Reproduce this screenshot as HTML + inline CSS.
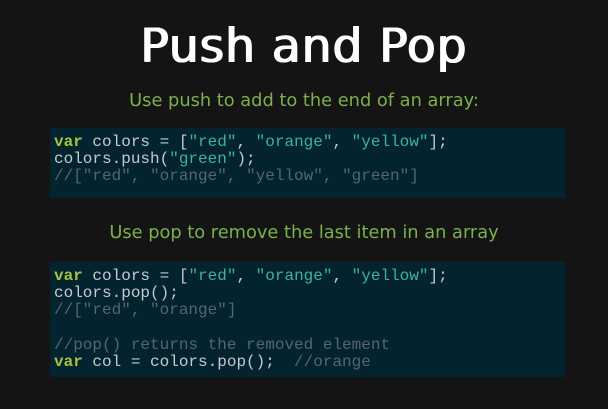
<!DOCTYPE html>
<html><head><meta charset="utf-8"><style>
html,body{margin:0;padding:0;}
body{width:608px;height:409px;background:#141415;position:relative;overflow:hidden;}
.t{position:absolute;left:0;width:608px;text-align:center;color:#fff;font-family:"DejaVu Sans","Liberation Sans",sans-serif;font-weight:normal;font-size:47px;top:21px;line-height:52px;text-shadow:0.8px 0 0 #fff,-0.8px 0 0 #fff;letter-spacing:1px;}
.s{position:absolute;left:0;width:608px;text-align:center;color:#7bb04a;font-family:"DejaVu Sans","Liberation Sans",sans-serif;font-size:17.8px;line-height:22px;}
.c{position:absolute;left:50px;width:515px;background:#03232f;font-family:"Liberation Mono",monospace;font-size:16px;line-height:17.2px;color:#c4cacd;box-sizing:border-box;padding:6px 0 0 4px;white-space:pre;}
.k{color:#a8c23a;font-weight:bold}
.g{color:#3cb39d}
.m{color:#56666c}
</style></head><body>
<div class="t">Push and Pop</div>
<div class="s" style="top:90px">Use push to add to the end of an array:</div>
<div class="c" style="top:128px;height:70px"><span class="k">var</span> colors = [<span class="g">"red"</span>, <span class="g">"orange"</span>, <span class="g">"yellow"</span>];
colors.push(<span class="g">"green"</span>);
<span class="m">//["red", "orange", "yellow", "green"]</span></div>
<div class="s" style="top:222px">Use pop to remove the last item in an array</div>
<div class="c" style="top:262px;height:115px"><span class="k">var</span> colors = [<span class="g">"red"</span>, <span class="g">"orange"</span>, <span class="g">"yellow"</span>];
colors.pop();
<span class="m">//["red", "orange"]</span>

<span class="m">//pop() returns the removed element</span>
<span class="k">var</span> col = colors.pop();  <span class="m">//orange</span></div>
</body></html>
